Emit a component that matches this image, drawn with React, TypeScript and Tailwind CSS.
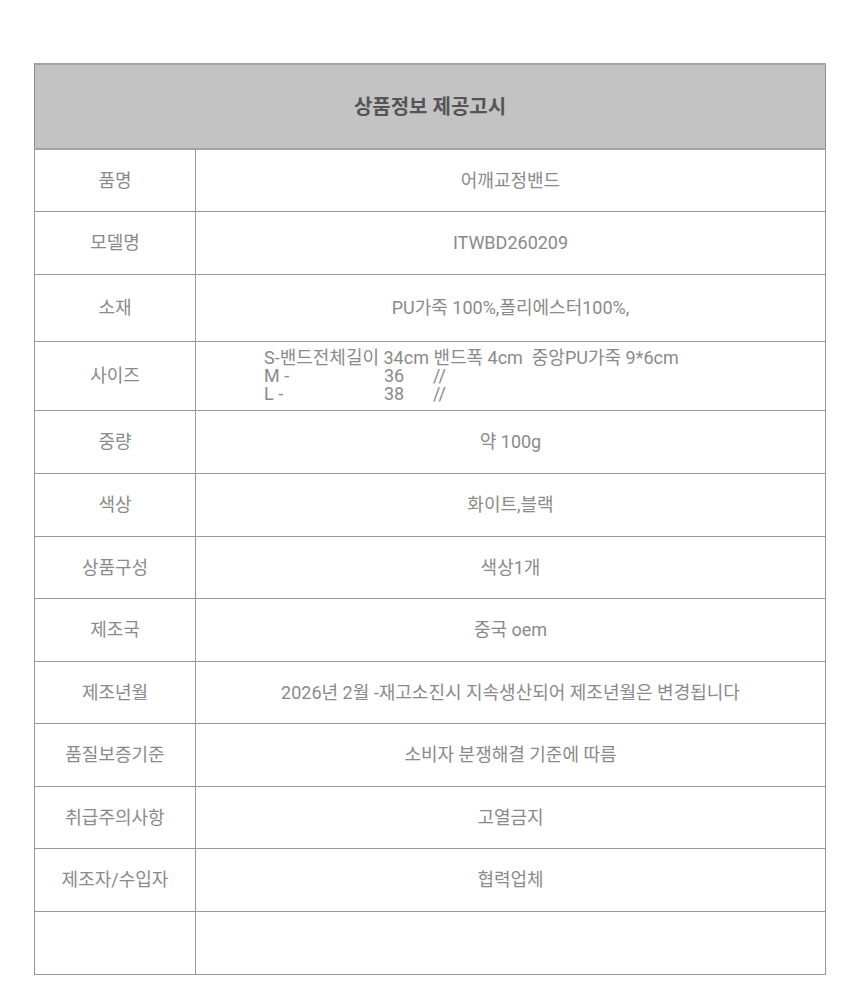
const rows: { label: string; value: string; h: string }[] = [
  { label: "품명", value: "어깨교정밴드", h: "h-[62px]" },
  { label: "모델명", value: "ITWBD260209", h: "h-[63px]" },
  { label: "소재", value: "PU가죽 100%,폴리에스터100%,", h: "h-[67px]" },
  { label: "사이즈", value: "", h: "h-[69px]" },
  { label: "중량", value: "약 100g", h: "h-[63px]" },
  { label: "색상", value: "화이트,블랙", h: "h-[63px]" },
  { label: "상품구성", value: "색상1개", h: "h-[62px]" },
  { label: "제조국", value: "중국 oem", h: "h-[63px]" },
  { label: "제조년월", value: "2026년 2월 -재고소진시 지속생산되어 제조년월은 변경됩니다", h: "h-[62px]" },
  { label: "품질보증기준", value: "소비자 분쟁해결 기준에 따름", h: "h-[63px]" },
  { label: "취급주의사항", value: "고열금지", h: "h-[62px]" },
  { label: "제조자/수입자", value: "협력업체", h: "h-[63px]" },
  { label: "", value: "", h: "h-[63px]" },
];

function SizeCell() {
  return (
    <div className="pl-[68px] text-left leading-[18px]">
      <div className="whitespace-pre">S-밴드전체길이 34cm 밴드폭 4cm  중앙PU가죽 9*6cm</div>
      <div className="flex">
        <span className="w-[120px]">M -</span>
        <span className="w-[49px]">36</span>
        <span>//</span>
      </div>
      <div className="flex">
        <span className="w-[120px]">L -</span>
        <span className="w-[49px]">38</span>
        <span>//</span>
      </div>
    </div>
  );
}

export default function App() {
  return (
    <div
      className="min-h-screen bg-white pt-[63px] px-[34px] text-[18px] text-[#8a8a8a]"
      style={{ fontFamily: "Roboto, 'Noto Sans CJK KR', sans-serif" }}
    >
      <table className="w-[792px] border-collapse">
        <tbody>
          <tr className="h-[85px]">
            <th
              colSpan={2}
              className="bg-[#c3c3c3] border-t-2 border-t-[#a3a3a3] border-b-2 border-b-[#a3a3a3] border-r border-r-[#8c8c8c] border-l border-l-[#8c8c8c] text-[20px] font-bold text-[#555555] text-center"
            >
              상품정보 제공고시
            </th>
          </tr>
          {rows.map((r, i) => (
            <tr key={i} className={r.h}>
              <td className="w-[161px] border border-[#999999] text-center p-0">{r.label}</td>
              <td className="border border-[#999999] text-center p-0">
                {r.label === "사이즈" ? <SizeCell /> : r.value}
              </td>
            </tr>
          ))}
        </tbody>
      </table>
    </div>
  );
}
